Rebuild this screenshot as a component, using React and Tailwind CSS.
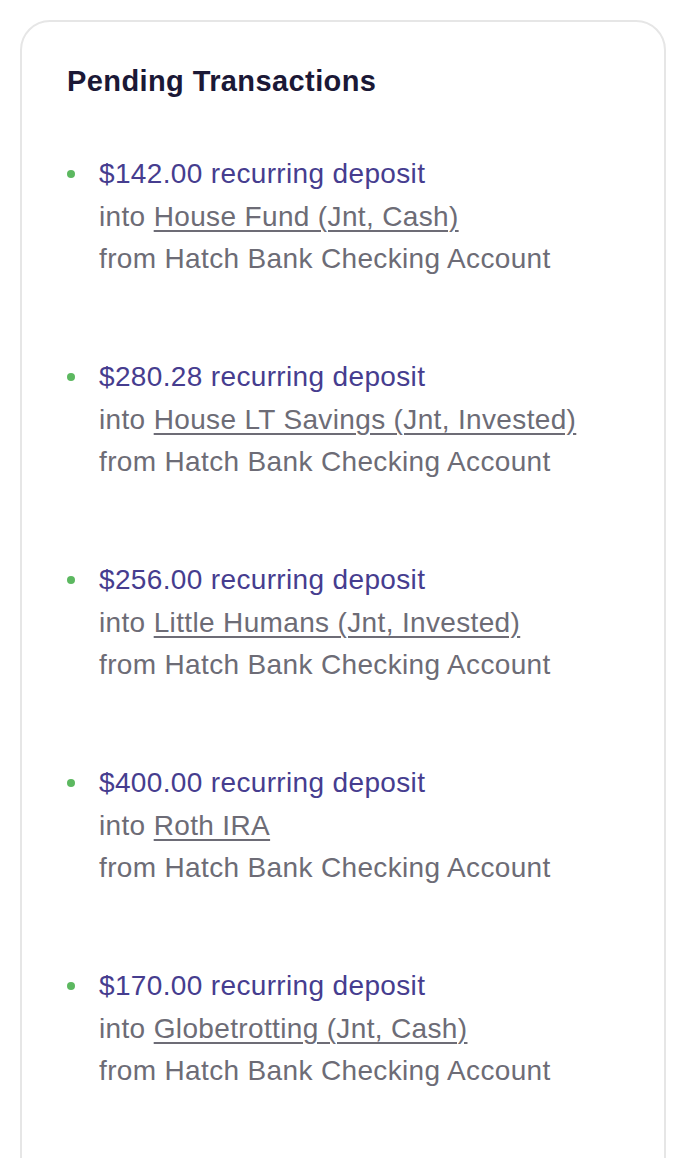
import React from "react";

const items = [
  { amount: "$142.00", account: "House Fund (Jnt, Cash)" },
  { amount: "$280.28", account: "House LT Savings (Jnt, Invested)" },
  { amount: "$256.00", account: "Little Humans (Jnt, Invested)" },
  { amount: "$400.00", account: "Roth IRA" },
  { amount: "$170.00", account: "Globetrotting (Jnt, Cash)" },
];

function App() {
  return (
    <div
      className="w-[696px] h-[1158px] overflow-hidden bg-white pt-[20px] pl-[20px]"
      style={{ fontFamily: '"Liberation Sans", Arial, sans-serif' }}
    >
      <div className="w-[646px] h-[1200px] rounded-[30px] border-2 border-[#e6e6e6] pt-[41px] pl-[45px]">
        <h1 className="text-[29px] leading-[36px] font-bold tracking-[0.4px] text-[#1b1836]">
          Pending Transactions
        </h1>

        <ul className="mt-[54px] flex flex-col gap-[75.5px]">
          {items.map((item) => (
            <li key={item.amount} className="flex text-[28px] leading-[42.5px] tracking-[0.35px]">
              <div className="w-[32px] h-[42.5px] flex items-center">
                <span className="w-[8px] h-[8px] rounded-full bg-[#5cb860]" />
              </div>
              <div>
                <div className="text-[#463d8f]">{item.amount} recurring deposit</div>
                <div className="text-[#6d6c76]">
                  into{" "}
                  <span className="underline decoration-[1.5px] underline-offset-[4px]">
                    {item.account}
                  </span>
                </div>
                <div className="text-[#6d6c76]">from Hatch Bank Checking Account</div>
              </div>
            </li>
          ))}
        </ul>
      </div>
    </div>
  );
}

export default App;
